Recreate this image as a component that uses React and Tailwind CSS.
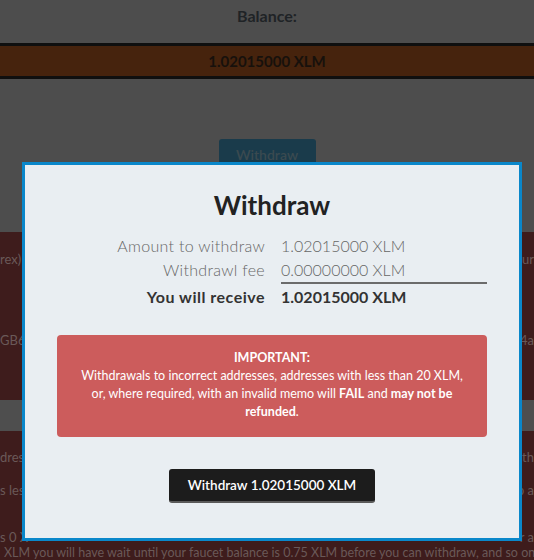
import React from 'react';

const bgLine = 'flex justify-between whitespace-nowrap overflow-hidden h-5 leading-5 text-[13px] text-[#6a5958]';
const bgLine16 = 'flex justify-between whitespace-nowrap overflow-hidden h-4 leading-4 text-[13px] text-[#6a5958]';

export default function App() {
  return (
    <div className="relative h-[560px] overflow-hidden bg-[#4d4d4d] font-['Lato',sans-serif]">
      {/* dimmed page behind the modal */}
      <div className="pt-[5px] text-center text-[16px] font-bold leading-[22px] text-[#1f2326]">Balance:</div>
      <div className="mt-[16px] border-y-[3px] border-[#0f0f0f] bg-[#46230d] h-[36px] flex items-center justify-center text-[15px] font-bold text-[#17110c]">
        1.02015000 XLM
      </div>
      <div className="flex justify-center mt-[60px]">
        <div className="w-[97px] h-[30px] rounded-[3px] bg-[#1a3b4b] text-[#3a4a50] text-[14px] font-semibold flex items-start pt-[5px] justify-center">
          Withdraw
        </div>
      </div>
      <div className="mt-[63px] bg-[#3e1c1c] h-[400px]">
        <div className="pt-[17px]" />
        <div className={bgLine}><span>rex) r</span><span>our</span></div>
        <div className="h-[61px]" />
        <div className={bgLine}><span>GB6Y</span><span>4a</span></div>
        <div className="h-[50px]" />
        <div className="h-[31px] bg-[#4e4e4e]" />
        <div className="h-[16px]" />
        <div className={bgLine}><span>dres</span><span>s th</span></div>
        <div className="h-[13px]" />
        <div className={bgLine}><span>s les</span><span>p a</span></div>
        <div className="h-[29px]" />
        <div className={bgLine16}><span>s 0 X</span><span>r a</span></div>
        <div className="whitespace-nowrap overflow-hidden h-4 leading-4 text-[12.5px] text-[#6a5958] pl-[4px]">
          XLM you will have wait until your faucet balance is 0.75 XLM before you can withdraw, and so on.
        </div>
      </div>

      {/* modal */}
      <div className="absolute left-[22px] top-[162px] w-[500px] h-[379px] border-[3px] border-[#0a87ca] bg-[#e9eef2] px-8">
        <h2 className="pt-[22px] text-center text-[26px] font-bold leading-[36px] text-[#222]">Withdraw</h2>
        <div className="mt-[11px] grid grid-cols-[208px_206px] gap-x-4 text-[16px] leading-[24px]">
          <div className="text-right font-light tracking-[0.3px] text-[#666]">Amount to withdraw</div>
          <div className="font-light text-[#666]">1.02015000 XLM</div>
          <div className="text-right font-light tracking-[0.3px] text-[#666]">Withdrawl fee</div>
          <div className="font-light text-[#666] border-b-[2px] border-[#6b6b6b]">0.00000000 XLM</div>
          <div className="text-right font-bold tracking-[0.5px] text-[#333] pt-[1px]">You will receive</div>
          <div className="font-bold text-[#333] pt-[1px]">1.02015000 XLM</div>
        </div>
        <div className="mt-[26px] rounded-[4px] bg-[#cc5c5c] pt-[14px] pb-4 px-4 text-center text-white text-[12.5px] leading-[18px]">
          <div className="font-bold">IMPORTANT:</div>
          Withdrawals to incorrect addresses, addresses with less than 20 XLM, or, where required, with an invalid memo will <b>FAIL</b> and <b>may not be refunded</b>.
        </div>
        <div className="mt-[32px] flex justify-center">
          <button className="w-[206px] h-[34px] rounded-[3px] bg-[#1c1c1c] border-b-[2px] border-[#5a5a5a] text-white text-[13.5px] font-semibold">
            Withdraw 1.02015000 XLM
          </button>
        </div>
      </div>
    </div>
  );
}
